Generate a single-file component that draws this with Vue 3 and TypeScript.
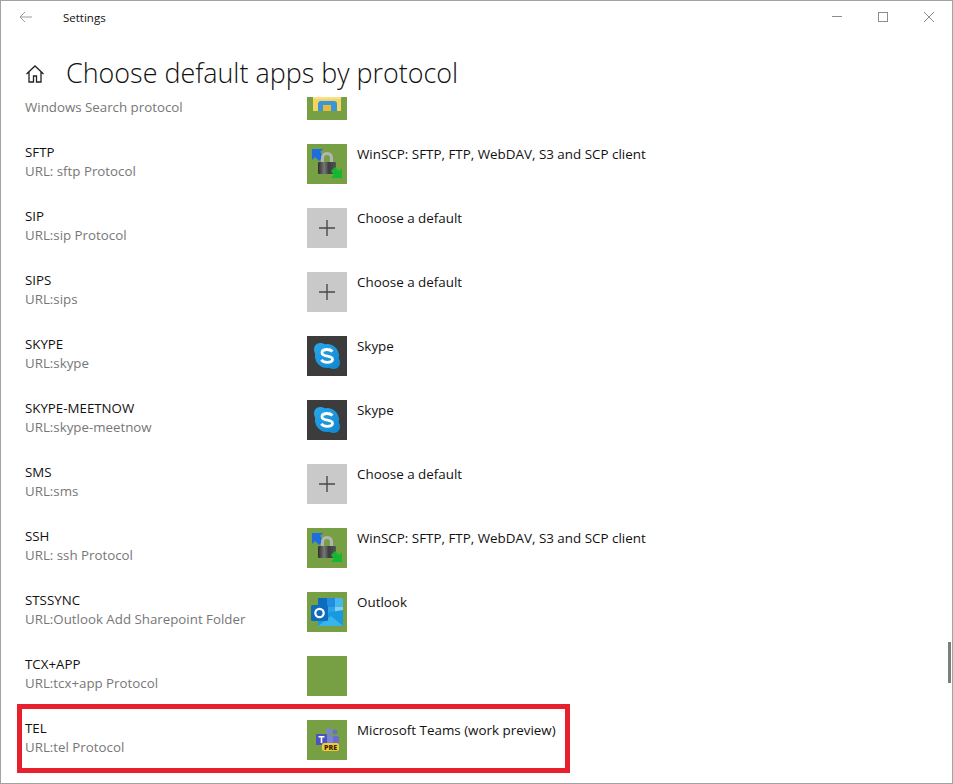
<template>
  <div class="window">
    <header class="titlebar">
      <svg class="back" width="14" height="12" viewBox="0 0 14 12" fill="none" stroke="#9a9a9a" stroke-width="1">
        <path d="M13 6H1M6 1 1 6l5 5" />
      </svg>
      <span class="app-title">Settings</span>
      <div class="controls">
        <svg width="12" height="12" viewBox="0 0 12 12" stroke="#8c8c8c" fill="none"><path d="M1 5.5h10" /></svg>
        <svg width="12" height="12" viewBox="0 0 12 12" stroke="#8c8c8c" fill="none"><rect x="1.5" y="1.5" width="9" height="9" /></svg>
        <svg width="12" height="12" viewBox="0 0 12 12" stroke="#8c8c8c" fill="none"><path d="m1 1 10 10M11 1 1 11" /></svg>
      </div>
    </header>

    <div class="heading">
      <svg class="home" width="20" height="20" viewBox="0 0 20 20" fill="none" stroke="#222" stroke-width="1.3">
        <path d="M1.5 10 10 2l8.500 8M4 8v10h4.500v-6h3v6H16V8" />
      </svg>
      <h1>Choose default apps by protocol</h1>
    </div>

    <div class="list">
      <div class="rows">
        <div v-for="row in rows" :key="row.desc" class="row">
          <div class="proto">
            <div class="name">{{ row.name }}</div>
            <div class="desc">{{ row.desc }}</div>
          </div>
          <div class="tile" :class="row.icon">
            <svg v-if="row.icon === 'explorer'" viewBox="0 0 40 40" width="40" height="40">
              <path d="M6 0h28v31H6z" fill="#f4d35e" />
              <path d="M6 15h28v4H6z" fill="#f8e08c" />
              <path d="M11 31v-7q0-3 3-3h13q3 0 3 3v7z" fill="#3a96d8" />
              <path d="M16 25h8v6h-8z" fill="#e8b93a" />
            </svg>
            <svg v-else-if="row.icon === 'winscp'" viewBox="0 0 40 40" width="40" height="40">
              <defs>
                <linearGradient id="lockBody" x1="0" x2="1" y1="0" y2="0">
                  <stop offset="0" stop-color="#2e2e2e" />
                  <stop offset=".35" stop-color="#777" />
                  <stop offset=".6" stop-color="#3c3c3c" />
                  <stop offset="1" stop-color="#555" />
                </linearGradient>
              </defs>
              <path d="M5 5h11l-3 3 4 4-5 5-4-4-3 3z" fill="#1b6de0" />
              <path d="M14 19v-5q0-6 6-6t6 6v5h-3v-5q0-3-3-3t-3 3v5z" fill="#b4b4b4" />
              <rect x="11" y="18" width="18" height="12" rx="1" fill="url(#lockBody)" />
              <path d="M35 34H24l3-3-3-4 4-4 4 4 3-3z" fill="#14b82e" />
            </svg>
            <svg v-else-if="row.icon === 'plus'" viewBox="0 0 40 40" width="40" height="40" fill="none" stroke="#4a4a4a" stroke-width="1.4">
              <path d="M20 12v16M12 20h16" />
            </svg>
            <svg v-else-if="row.icon === 'skype'" viewBox="0 0 40 40" width="40" height="40">
              <defs>
                <linearGradient id="skypeBlob" x1="0" x2="1" y1="0" y2="1">
                  <stop offset="0" stop-color="#2aa8ec" />
                  <stop offset="1" stop-color="#0f86cf" />
                </linearGradient>
              </defs>
              <path
                d="M13 7q3 0 4.500 1.200Q19 8 20 8A12 12 0 0 1 32 20q0 1-.2 2.500Q33 24 33 27a6 6 0 0 1-6 6q-3 0-4.500-1.200Q21 32 20 32A12 12 0 0 1 8 20q0-1 .2-2.500Q7 16 7 13a6 6 0 0 1 6-6z"
                fill="url(#skypeBlob)"
              />
              <path d="M25.500 15.500q-2-2-5.500-2-5 0-5 3.200c0 4.800 10.500 2.300 10.500 6.600q0 3-5.200 3-4 0-6-2.500" fill="none" stroke="#fff" stroke-width="2.800" />
            </svg>
            <svg v-else-if="row.icon === 'outlook'" viewBox="0 0 40 40" width="40" height="40">
              <path d="M11 6h9v9h-9z" fill="#0f6cbd" />
              <path d="M20 6h8v9h-8z" fill="#1f8ee0" />
              <path d="M28 6h6q2 0 2 2v7h-8z" fill="#45b6ee" />
              <path d="M20 15h8v9h-8z" fill="#2ba4e6" />
              <path d="M28 15h8v9h-8z" fill="#7fd0f2" />
              <path d="M11 22 36 18v16H11z" fill="#1a9ade" />
              <path d="m11 34 13-10 12 10z" fill="#38b4ec" />
              <rect x="4" y="13" width="17" height="16" rx="1.500" fill="#0f6cbd" />
              <circle cx="12.500" cy="21" r="4.200" fill="none" stroke="#fff" stroke-width="2.200" />
            </svg>
            <svg v-else-if="row.icon === 'teams'" viewBox="0 0 40 40" width="40" height="40">
              <circle cx="28" cy="12" r="2.500" fill="#6a70c4" />
              <rect x="25" y="16" width="7" height="9" rx="1.500" fill="#6a70c4" />
              <circle cx="22" cy="11" r="3" fill="#7b83d4" />
              <rect x="18" y="15" width="8" height="10" fill="#7b83d4" />
              <rect x="9" y="14" width="11" height="11" rx="1" fill="#4b53bc" />
              <path d="M11.500 16.800h6M14.500 16.800V23" stroke="#fff" stroke-width="1.600" fill="none" />
              <rect x="15" y="23" width="17" height="8" rx="2" fill="#f6c83c" />
              <text x="23.500" y="29.700" text-anchor="middle" class="pre">PRE</text>
            </svg>
          </div>
          <div class="app">{{ row.app }}</div>
        </div>
      </div>
    </div>

    <div class="scrollbar"></div>
    <div class="highlight"></div>
  </div>
</template>

<script setup lang="ts">
interface ProtocolRow {
  name: string
  desc: string
  app: string
  icon: string
}

const WINSCP = 'WinSCP: SFTP, FTP, WebDAV, S3 and SCP client'
const CHOOSE = 'Choose a default'

// 先頭の行はスクロールで上半分が隠れている
const rows: ProtocolRow[] = [
  { name: '', desc: 'Windows Search protocol', app: '', icon: 'explorer' },
  { name: 'SFTP', desc: 'URL: sftp Protocol', app: WINSCP, icon: 'winscp' },
  { name: 'SIP', desc: 'URL:sip Protocol', app: CHOOSE, icon: 'plus' },
  { name: 'SIPS', desc: 'URL:sips', app: CHOOSE, icon: 'plus' },
  { name: 'SKYPE', desc: 'URL:skype', app: 'Skype', icon: 'skype' },
  { name: 'SKYPE-MEETNOW', desc: 'URL:skype-meetnow', app: 'Skype', icon: 'skype' },
  { name: 'SMS', desc: 'URL:sms', app: CHOOSE, icon: 'plus' },
  { name: 'SSH', desc: 'URL: ssh Protocol', app: WINSCP, icon: 'winscp' },
  { name: 'STSSYNC', desc: 'URL:Outlook Add Sharepoint Folder', app: 'Outlook', icon: 'outlook' },
  { name: 'TCX+APP', desc: 'URL:tcx+app Protocol', app: '', icon: 'blank' },
  { name: 'TEL', desc: 'URL:tel Protocol', app: 'Microsoft Teams (work preview)', icon: 'teams' },
]
</script>

<style>
html,
body {
  margin: 0;
  background: #fff;
}
</style>

<style scoped>
.window {
  position: relative;
  box-sizing: border-box;
  width: 953px;
  height: 784px;
  overflow: hidden;
  display: flex;
  flex-direction: column;
  background: #fff;
  border: 1px solid #a3a3a3;
  font-family: "Open Sans", "Noto Sans", sans-serif;
  color: #000;
}
.titlebar {
  flex: none;
  height: 32px;
  display: flex;
  align-items: center;
}
.back {
  margin-left: 18px;
  margin-top: -1px;
}
.app-title {
  margin-left: 30px;
  font-size: 11.5px;
  color: #111;
}
.controls {
  margin-left: auto;
  margin-right: 17px;
  display: flex;
  gap: 34px;
  margin-top: -1px;
}
.heading {
  flex: none;
  height: 64px;
  display: flex;
  align-items: flex-start;
  padding-left: 24px;
}
.home {
  margin-top: 31px;
}
h1 {
  margin: 22px 0 0 21px;
  font-size: 26.9px;
  font-weight: 300;
  line-height: 36px;
  color: #111;
}
.list {
  flex: 1;
  min-height: 0;
  overflow: hidden;
}
.rows {
  margin-top: -19px;
}
.row {
  height: 64px;
  display: flex;
  padding-left: 24px;
}
.proto {
  width: 282px;
  flex: none;
  padding-top: 1px;
  font-size: 13.3px;
  line-height: 19px;
}
.name {
  min-height: 19px;
  color: #111;
}
.desc {
  color: #777;
}
.tile {
  flex: none;
  width: 40px;
  height: 40px;
  margin-top: 2px;
  background: #77a045;
}
.tile svg {
  display: block;
}
.tile.plus {
  background: #c9c9c9;
}
.tile.skype {
  background: #3c3c3c;
}
.pre {
  font-size: 7px;
  font-weight: 800;
  fill: #3a2a00;
}
.app {
  margin-left: 10px;
  margin-top: 2px;
  font-size: 13.4px;
  line-height: 20px;
  color: #111;
}
.scrollbar {
  position: absolute;
  left: 947px;
  top: 641px;
  width: 3px;
  height: 41px;
  background: #7e7e7e;
}
.highlight {
  position: absolute;
  left: 16px;
  top: 703px;
  width: 553px;
  height: 69px;
  box-sizing: border-box;
  border: 5px solid #e8202e;
  pointer-events: none;
}
</style>
